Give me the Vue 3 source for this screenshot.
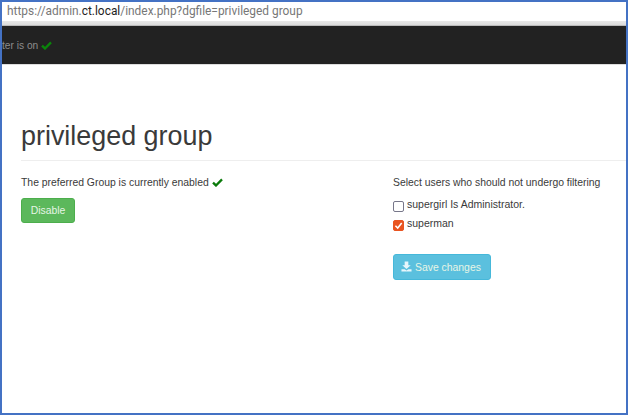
<script setup>
const users = [
  { name: 'supergirl Is Administrator.', checked: false },
  { name: 'superman', checked: true }
]
</script>

<template>
  <div class="frame">
    <div class="urlbar">
      <span>https://admin.</span><span class="host">ct.local</span><span>/index.php?dgfile=privileged group</span>
    </div>
    <div class="strip"></div>
    <div class="nav">
      <span>ter is on</span>
      <svg class="check" width="11" height="9" viewBox="0 0 12 10"><path d="M1 5.2 L4.3 8.3 L11 1.6" fill="none" stroke="#0a850a" stroke-width="2.6" /></svg>
    </div>
    <main class="page">
      <h1>privileged group</h1>
      <div class="cols">
        <section class="left">
          <p class="status">
            The preferred Group is currently enabled
            <svg class="check" width="11" height="9" viewBox="0 0 12 10"><path d="M1 5.2 L4.3 8.3 L11 1.6" fill="none" stroke="#0a7a0a" stroke-width="2.6" /></svg>
          </p>
          <button class="btn green">Disable</button>
        </section>
        <section class="right">
          <p class="select">Select users who should not undergo filtering</p>
          <label v-for="u in users" :key="u.name" class="user">
            <span class="box" :class="{ on: u.checked }">
              <svg v-if="u.checked" width="11" height="11" viewBox="0 0 10 10"><path d="M2.2 5.2 L4.3 7.3 L7.9 2.8" fill="none" stroke="#fff" stroke-width="1.4" /></svg>
            </span>
            <span>{{ u.name }}</span>
          </label>
          <button class="btn blue">
            <svg width="11" height="11" viewBox="0 0 12 12"><path d="M4 0.5 H8 V4.5 H10.6 L6 8.6 L1.4 4.5 H4 Z M0.5 9 H4 L6 10.4 L8 9 H11.5 V11.5 H0.5 Z" fill="#e8f6fb" /></svg>
            Save changes
          </button>
        </section>
      </div>
    </main>
  </div>
</template>

<style scoped>
.frame {
  box-sizing: border-box;
  width: 628px;
  height: 415px;
  border: 2px solid #4472c4;
  background: #fff;
  overflow: hidden;
  font-family: "Liberation Sans", Arial, sans-serif;
  color: #3a3a3a;
}
.urlbar {
  height: 19px;
  padding-left: 5px;
  font: 11.9px/19px Roboto, sans-serif;
  color: #777;
  white-space: nowrap;
}
.host { color: #222; }
.strip {
  height: 5px;
  background: linear-gradient(#e8e8e8, #dcdcdc 80%, #999);
}
.nav {
  height: 38px;
  background: #222;
  color: #8c8c8c;
  font-size: 10.2px;
  white-space: nowrap;
  display: flex;
  align-items: center;
  gap: 3px;
  border-bottom: 1px solid #ddd;
}
.page { padding-left: 19px; }
h1 {
  margin: 54px 0 0;
  padding-bottom: 7px;
  font-size: 26.9px;
  line-height: 34px;
  font-weight: 400;
  border-bottom: 1px solid #eee;
}
.cols { display: flex; }
.left { flex: none; width: 372px; }
.right { flex: none; }
p { margin: 0; font-size: 10.4px; }
.status, .select { margin-top: 13px; line-height: 17px; white-space: nowrap; }
.check { vertical-align: -1px; }
.btn {
  display: block;
  border-radius: 3px;
  font: 10.4px "Liberation Sans", Arial, sans-serif;
  color: #e6f5e6;
  padding: 0;
}
.green {
  margin-top: 7px;
  width: 54px;
  height: 25px;
  background: #5cb85c;
  border: 1px solid #4cae4c;
}
.user {
  display: flex;
  align-items: flex-start;
  font-size: 10.5px;
  line-height: 14px;
  height: 19px;
  gap: 3px;
}
.select + .user { margin-top: 6px; }
.box {
  box-sizing: border-box;
  width: 11px;
  height: 11px;
  margin-top: 4px;
  border: 1.5px solid #77778a;
  border-radius: 2px;
  background: #fff;
  display: flex;
}
.box.on { background: #e95420; border-color: #e95420; }
.box svg { margin: -1.5px; }
.blue {
  margin-top: 19px;
  width: 98px;
  height: 26px;
  padding-right: 2px;
  background: #5bc0de;
  border: 1px solid #46b8da;
}
.blue svg { vertical-align: -1px; }
</style>
